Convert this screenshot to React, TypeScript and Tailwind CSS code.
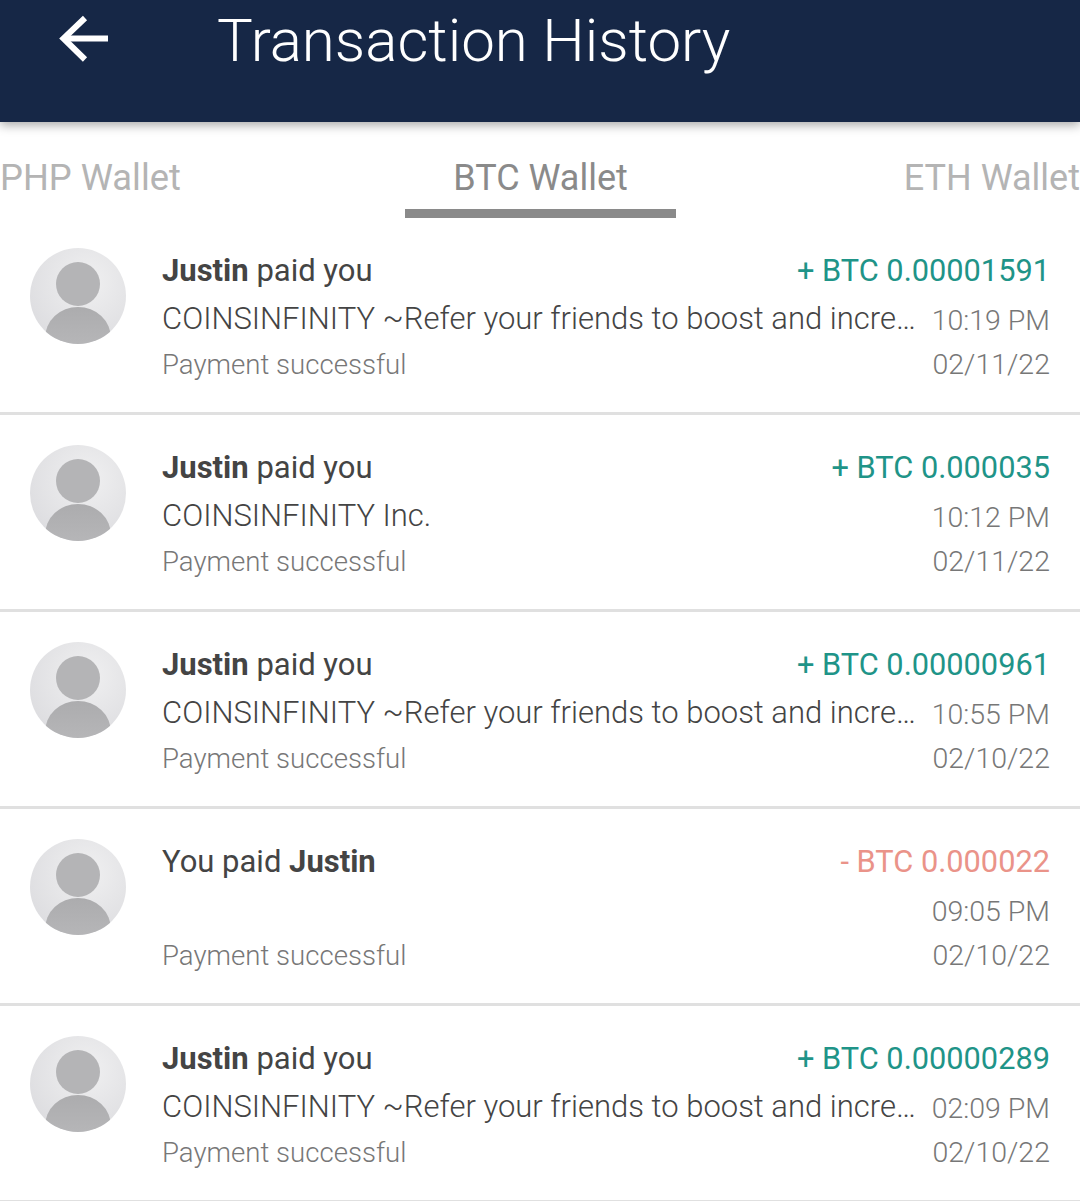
const FONT = "font-['Roboto','Liberation_Sans',sans-serif]"

interface ITransaction {
  name_first: boolean
  amount: string
  amount_color: string
  description: string
  time: string
  date: string
}

const LONG_TEXT = "COINSINFINITY ~Refer your friends to boost and incre…"

const transactions: ITransaction[] = [
  { name_first: true, amount: "+ BTC 0.00001591", amount_color: "text-[#1f9488]", description: LONG_TEXT, time: "10:19 PM", date: "02/11/22" },
  { name_first: true, amount: "+ BTC 0.000035", amount_color: "text-[#1f9488]", description: "COINSINFINITY Inc.", time: "10:12 PM", date: "02/11/22" },
  { name_first: true, amount: "+ BTC 0.00000961", amount_color: "text-[#1f9488]", description: LONG_TEXT, time: "10:55 PM", date: "02/10/22" },
  { name_first: false, amount: "- BTC 0.000022", amount_color: "text-[#ea9389]", description: "", time: "09:05 PM", date: "02/10/22" },
  { name_first: true, amount: "+ BTC 0.00000289", amount_color: "text-[#1f9488]", description: LONG_TEXT, time: "02:09 PM", date: "02/10/22" },
]

const Avatar = ({ id }: { id: number }) => (
  <svg width="96" height="96" viewBox="0 0 96 96" className="shrink-0">
    <defs>
      <radialGradient id={`avatar-bg-${id}`} cx="0.6" cy="0.35" r="0.7">
        <stop offset="0" stopColor="#f0f0f1" />
        <stop offset="1" stopColor="#dddde0" />
      </radialGradient>
      <linearGradient id={`avatar-body-${id}`} x1="0" y1="0" x2="0" y2="1">
        <stop offset="0" stopColor="#acacae" />
        <stop offset="1" stopColor="#bcbcbe" />
      </linearGradient>
      <clipPath id={`avatar-clip-${id}`}>
        <circle cx="48" cy="48" r="48" />
      </clipPath>
    </defs>
    <circle cx="48" cy="48" r="48" fill={`url(#avatar-bg-${id})`} />
    <circle cx="48" cy="36" r="22" fill="#b4b4b6" />
    <ellipse cx="48" cy="90" rx="33" ry="31" fill={`url(#avatar-body-${id})`} clipPath={`url(#avatar-clip-${id})`} />
  </svg>
)

const TransactionRow = ({ tx, id }: { tx: ITransaction; id: number }) => (
  <div className="h-[197px] flex flex-row items-start gap-9 pl-[30px] pr-[30px] pt-[30px] border-b-[3px] border-[#e0e0e0]">
    <Avatar id={id} />
    <div className="flex-1 min-w-0 flex flex-col -mt-[1px]">
      <div className="h-[48px] flex flex-row items-center justify-between">
        <p className="text-[31px] text-[#444444]">
          {tx.name_first ? (
            <>
              <b className="font-bold">Justin</b> paid you
            </>
          ) : (
            <>
              You paid <b className="font-bold">Justin</b>
            </>
          )}
        </p>
        <p className={`text-[30.75px] ${tx.amount_color}`}>{tx.amount}</p>
      </div>
      <div className="h-[48px] flex flex-row items-center justify-between">
        <p className="text-[31px] font-light text-[#444444] whitespace-nowrap">{tx.description}</p>
        <p className="text-[28.5px] font-light text-[#777777] mt-1">{tx.time}</p>
      </div>
      <div className="h-[44px] flex flex-row items-center justify-between">
        <p className="text-[27.6px] font-light text-[#777777]">Payment successful</p>
        <p className="text-[28.5px] font-light text-[#777777]">{tx.date}</p>
      </div>
    </div>
  </div>
)

const App = () => {
  return (
    <div className={`w-[1080px] h-[1201px] overflow-hidden bg-white ${FONT}`}>
      <div className="relative z-10 h-[122px] bg-[#162746] flex flex-row items-start shadow-[0_3px_10px_rgba(0,0,0,0.35)]">
        <svg width="52" height="50" viewBox="0 0 52 50" className="ml-[58px] mt-[14px]" fill="none" stroke="#ffffff" strokeWidth="6">
          <path d="M50 24.5H5" />
          <path d="M27 4L5.5 24.5L27 45.5" />
        </svg>
        <h1 className="ml-[107px] mt-[7px] text-[60px] leading-[68px] font-light text-white whitespace-nowrap">Transaction History</h1>
      </div>
      <div className="h-[96px] flex flex-row">
        <div className="w-[405px] pt-[35px] text-[36.3px] leading-[42px] text-[#b4b4b4] whitespace-nowrap">PHP Wallet</div>
        <div className="w-[271px] h-full pt-[35px] border-b-[9px] border-[#8a8a8a] text-center text-[36px] leading-[42px] text-[#8a8a8a] whitespace-nowrap">BTC Wallet</div>
        <div className="flex-1 pt-[35px] text-right text-[36px] leading-[42px] text-[#b4b4b4] whitespace-nowrap">ETH Wallet</div>
      </div>
      {transactions.map((tx, i) => (
        <TransactionRow key={i} tx={tx} id={i} />
      ))}
    </div>
  )
}

export default App
